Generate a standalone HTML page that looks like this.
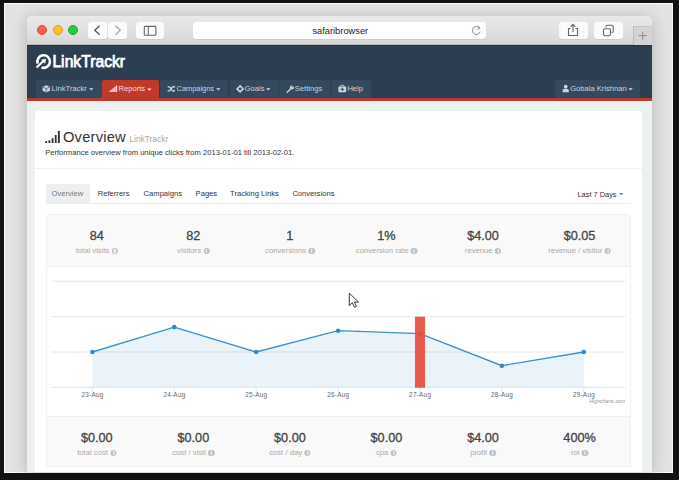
<!DOCTYPE html><html><head><meta charset="utf-8"><style>
html,body{margin:0;padding:0;}
body{width:679px;height:480px;position:relative;overflow:hidden;background:#121212;font-family:"Liberation Sans",sans-serif;}
.t{position:absolute;white-space:nowrap;}
.r{position:absolute;box-sizing:border-box;}
svg{position:absolute;overflow:visible;}
</style></head><body>
<div class="r" style="left:4px;top:3px;width:669.00px;height:470.00px;background:#fafafa;"></div>
<div class="r" style="left:5px;top:4px;width:667.00px;height:468.00px;background:#e3e3e3;"></div>
<div class="r" style="left:27px;top:16px;width:625.00px;height:456.00px;background:#ecf0f1;border-radius:5px 5px 0 0;box-shadow:0 2px 16px rgba(0,0,0,0.22);"></div>
<div class="r" style="left:27px;top:16px;width:625.00px;height:28.50px;background:linear-gradient(#e9e9e9,#e2e2e2 50%,#d6d6d6);border-radius:5px 5px 0 0;border-bottom:1px solid #b8b8b8;"></div>
<div class="r" style="left:36.8px;top:24.6px;width:10.40px;height:10.40px;background:#fd5f57;border-radius:50%;border:0.5px solid #e2463f;"></div>
<div class="r" style="left:52.5px;top:24.6px;width:10.40px;height:10.40px;background:#febb2e;border-radius:50%;border:0.5px solid #e09e1e;"></div>
<div class="r" style="left:68.0px;top:24.6px;width:10.40px;height:10.40px;background:#28c840;border-radius:50%;border:0.5px solid #1aab29;"></div>
<div class="r" style="left:88px;top:22px;width:19.00px;height:16.50px;background:#fbfbfb;border-radius:3px;box-shadow:0 0.5px 0.5px rgba(0,0,0,0.12);"></div>
<div class="r" style="left:108.3px;top:22px;width:18.50px;height:16.50px;background:#fbfbfb;border-radius:3px;box-shadow:0 0.5px 0.5px rgba(0,0,0,0.12);"></div>
<div class="r" style="left:135.7px;top:22px;width:28.80px;height:16.50px;background:#fbfbfb;border-radius:3px;box-shadow:0 0.5px 0.5px rgba(0,0,0,0.12);"></div>
<svg style="left:0;top:0" width="679" height="480"><path d="M99.6,25.8 L94.8,30.3 L99.6,34.8" fill="none" stroke="#555" stroke-width="1.3"/><path d="M115.5,25.8 L120.3,30.3 L115.5,34.8" fill="none" stroke="#aaa" stroke-width="1.3"/><rect x="144.3" y="26.4" width="11.6" height="8.8" fill="none" stroke="#666" stroke-width="1.1" rx="0.8"/><line x1="148.3" y1="26.4" x2="148.3" y2="35.2" stroke="#666" stroke-width="1.1"/></svg><div class="r" style="left:192.5px;top:22.3px;width:293.50px;height:16.50px;background:#fff;border-radius:3.5px;box-shadow:0 0.5px 0.5px rgba(0,0,0,0.1);"></div>
<div class="t" style="left:340.30px;transform:translateX(-50%);top:26.53px;font-size:9.3px;line-height:9.3px;color:#222;font-weight:400;">safaribrowser</div>
<svg style="left:0;top:0" width="679" height="480"><path d="M479.6,28.2 A4,4 0 1 0 480.2,31.5" fill="none" stroke="#888" stroke-width="1"/><path d="M477.6,25.9 L480,28.3 L477.4,29.6" fill="none" stroke="#888" stroke-width="1"/></svg><div class="r" style="left:559px;top:21.8px;width:28.50px;height:17.20px;background:#fbfbfb;border-radius:3px;box-shadow:0 0.5px 0.5px rgba(0,0,0,0.12);"></div>
<div class="r" style="left:594px;top:21.8px;width:28.80px;height:17.20px;background:#fbfbfb;border-radius:3px;box-shadow:0 0.5px 0.5px rgba(0,0,0,0.12);"></div>
<svg style="left:0;top:0" width="679" height="480"><path d="M570.5,28.5 L568.5,28.5 L568.5,35.5 L577.5,35.5 L577.5,28.5 L575.5,28.5" fill="none" stroke="#666" stroke-width="1.1"/><path d="M573,32 L573,24.5 M570.6,26.8 L573,24.4 L575.4,26.8" fill="none" stroke="#666" stroke-width="1.1"/><rect x="603.5" y="28.8" width="7" height="7" rx="1.5" fill="none" stroke="#666" stroke-width="1.1"/><path d="M606,27.2 L606,26.5 Q606,25.3 607.2,25.3 L612,25.3 Q613.2,25.3 613.2,26.5 L613.2,31.3 Q613.2,32.5 612,32.5 L611.5,32.5" fill="none" stroke="#666" stroke-width="1.1"/></svg><div class="r" style="left:633px;top:26px;width:19.00px;height:18.50px;background:#d3d3d3;border-left:1px solid #bdbdbd;border-top:1px solid #c5c5c5;"></div>
<svg style="left:0;top:0" width="679" height="480"><path d="M642.7,31.6 L642.7,39.6 M638.7,35.6 L646.7,35.6" stroke="#8a8a8a" stroke-width="1"/></svg><div class="r" style="left:27px;top:44.5px;width:625.00px;height:53.50px;background:#2c3e50;"></div>
<div class="r" style="left:27px;top:98px;width:625.00px;height:2.50px;background:#b83a2e;"></div>
<div class="r" style="left:27px;top:44.5px;width:625.00px;height:1.80px;background:#25323f;"></div>
<svg style="left:0;top:0" width="679" height="480"><path d="M37.73,63.67 A6.3,6.3 0 1 1 41.53,67.47" fill="none" stroke="#fff" stroke-width="2.5"/><path d="M36.6,67.4 L43.4,61.0" stroke="#fff" stroke-width="2.1"/><path d="M46.1,58.7 L41.0,59.7 L45.1,63.8 Z" fill="#fff"/></svg><div class="t" style="left:52.40px;top:54.39px;font-size:15.6px;line-height:15.6px;color:#fff;font-weight:400;-webkit-text-stroke:0.75px #fff;letter-spacing:0.05px;">LinkTrackr</div>
<div class="r" style="left:35.8px;top:79.5px;width:65.80px;height:18.50px;background:#34495e;border-radius:2px 2px 0 0;"></div>
<div class="r" style="left:160px;top:79.5px;width:67.50px;height:18.50px;background:#34495e;border-radius:2px 2px 0 0;"></div>
<div class="r" style="left:229.5px;top:79.5px;width:48.00px;height:18.50px;background:#34495e;border-radius:2px 2px 0 0;"></div>
<div class="r" style="left:279.3px;top:79.5px;width:50.50px;height:18.50px;background:#34495e;border-radius:2px 2px 0 0;"></div>
<div class="r" style="left:331.3px;top:79.5px;width:39.80px;height:18.50px;background:#34495e;border-radius:2px 2px 0 0;"></div>
<div class="r" style="left:555px;top:79.5px;width:85.20px;height:18.50px;background:#34495e;border-radius:2px 2px 0 0;"></div>
<div class="r" style="left:102.3px;top:79.5px;width:56.50px;height:18.50px;background:#c0392b;border-radius:2px 2px 0 0;"></div>
<div class="t" style="left:51.60px;top:85.07px;font-size:7.6px;line-height:7.6px;color:#cdd4da;font-weight:400;">LinkTrackr</div>
<div class="t" style="left:118.50px;top:85.17px;font-size:7.6px;line-height:7.6px;color:#f7dcd8;font-weight:400;">Reports</div>
<div class="t" style="left:176.60px;top:85.24px;font-size:7.4px;line-height:7.4px;color:#cdd4da;font-weight:400;">Campaigns</div>
<div class="t" style="left:244.60px;top:85.07px;font-size:7.6px;line-height:7.6px;color:#cdd4da;font-weight:400;">Goals</div>
<div class="t" style="left:294.80px;top:85.07px;font-size:7.6px;line-height:7.6px;color:#cdd4da;font-weight:400;">Settings</div>
<div class="t" style="left:347.40px;top:85.07px;font-size:7.6px;line-height:7.6px;color:#cdd4da;font-weight:400;">Help</div>
<div class="t" style="left:570.20px;top:85.07px;font-size:7.6px;line-height:7.6px;color:#cdd4da;font-weight:400;">Gobala Krishnan</div>
<svg style="left:0;top:0" width="679" height="480"><path d="M89,88.2 L93.5,88.2 L91.25,90.5 Z" fill="#cdd4da"/><path d="M147.1,88.4 L151.6,88.4 L149.35,90.7 Z" fill="#f7dcd8"/><path d="M216,88.2 L220.5,88.2 L218.25,90.5 Z" fill="#cdd4da"/><path d="M266,88.2 L270.5,88.2 L268.25,90.5 Z" fill="#cdd4da"/><path d="M628.3,88.2 L632.8,88.2 L630.55,90.5 Z" fill="#cdd4da"/><path d="M46.3,85.2 L50,86.9 L50,90.8 L46.3,92.6 L42.6,90.8 L42.6,86.9 Z" fill="#cdd4da"/><path d="M42.8,87 L46.3,88.7 L49.8,87 M46.3,88.7 L46.3,92.4" fill="none" stroke="#34495e" stroke-width="0.7"/><path d="M109.2,92.1 h1.5 v-1.4 h-1.5 Z M110.9,92.1 h1.4 v-2.6 h-1.4 Z M112.5,92.1 h1.4 v-3.9 h-1.4 Z M114.1,92.1 h1.4 v-5.2 h-1.4 Z M115.7,92.1 h1.5 v-6.5 h-1.5 Z" fill="#f4d3ce"/><path d="M167.6,86.8 L169.5,86.8 L172.5,90.8 L174.2,90.8 M167.6,90.8 L169.5,90.8 L172.5,86.8 L174.2,86.8" fill="none" stroke="#cdd4da" stroke-width="1.3"/><path d="M173.6,85.4 L175.4,86.8 L173.6,88.2 Z M173.6,89.4 L175.4,90.8 L173.6,92.2 Z" fill="#cdd4da"/><path d="M240.1,85.9 L243.1,88.9 L240.1,91.9 L237.1,88.9 Z" fill="none" stroke="#d3d9de" stroke-width="1.5"/><path d="M287.2,92.3 L291.2,88.3" stroke="#cdd4da" stroke-width="1.5" stroke-linecap="round"/><circle cx="292" cy="87.5" r="2.1" fill="#cdd4da"/><path d="M292.4,87.1 L294.6,84.9" stroke="#34495e" stroke-width="1.1"/><rect x="338.4" y="86.4" width="7.8" height="5.8" rx="1" fill="#cdd4da"/><path d="M340.6,86.4 L340.6,85.3 L344,85.3 L344,86.4" fill="none" stroke="#cdd4da" stroke-width="0.8"/><path d="M342.3,87.6 L342.3,91 M340.6,89.3 L344,89.3" stroke="#34495e" stroke-width="1"/><circle cx="565.7" cy="86.6" r="1.9" fill="#cdd4da"/><path d="M562.6,92.3 L562.6,90.6 Q562.6,88.8 564.4,88.8 L567,88.8 Q568.8,88.8 568.8,90.6 L568.8,92.3 Z" fill="#cdd4da"/></svg><div class="r" style="left:35px;top:111px;width:607.00px;height:361.00px;background:#fff;border-radius:2px 2px 0 0;"></div>
<svg style="left:0;top:0" width="679" height="480"><rect x="45.3" y="141" width="1.8" height="2" fill="#333"/><rect x="48.5" y="140.2" width="1.8" height="2.8" fill="#333"/><rect x="51.7" y="138.2" width="1.8" height="4.8" fill="#333"/><rect x="54.8" y="135" width="1.8" height="8" fill="#333"/><rect x="57.9" y="131" width="1.9" height="12" fill="#333"/></svg><div class="t" style="left:63.00px;top:130.16px;font-size:14.7px;line-height:14.7px;color:#333;font-weight:400;letter-spacing:0.2px;">Overview</div>
<div class="t" style="left:129.40px;top:135.39px;font-size:8.4px;line-height:8.4px;color:#a6a6a6;font-weight:400;">LinkTrackr</div>
<div class="t" style="left:45.20px;top:149.07px;font-size:7.6px;line-height:7.6px;color:#333;font-weight:400;">Performance overview from unique clicks from 2013-01-01 till 2013-02-01.</div>
<div class="r" style="left:35px;top:168px;width:607.00px;height:1.00px;background:#f0f0f0;"></div>
<div class="r" style="left:45.6px;top:184.2px;width:44.40px;height:19.30px;background:#ecf0f1;border-radius:2px 2px 0 0;"></div>
<div class="r" style="left:45.6px;top:203.3px;width:585.40px;height:1.00px;background:#eeeeee;"></div>
<div class="t" style="left:51.60px;top:190.37px;font-size:7.6px;line-height:7.6px;color:#777;font-weight:400;">Overview</div>
<div class="t" style="left:97.80px;top:190.37px;font-size:7.6px;line-height:7.6px;color:#333;font-weight:400;">Referrers</div>
<div class="t" style="left:143.60px;top:190.37px;font-size:7.6px;line-height:7.6px;color:#333;font-weight:400;">Campaigns</div>
<div class="t" style="left:195.60px;top:190.37px;font-size:7.6px;line-height:7.6px;color:#333;font-weight:400;">Pages</div>
<div class="t" style="left:230.10px;top:190.37px;font-size:7.6px;line-height:7.6px;color:#333;font-weight:400;">Tracking Links</div>
<div class="t" style="left:292.40px;top:190.37px;font-size:7.6px;line-height:7.6px;color:#333;font-weight:400;">Conversions</div>
<div class="t" style="left:577.50px;top:190.54px;font-size:7.4px;line-height:7.4px;color:#333;font-weight:400;">Last 7 Days</div>
<svg style="left:0;top:0" width="679" height="480"><path d="M619,192.9 L623.5,192.9 L621.25,195.20000000000002 Z" fill="#2f8fd8"/></svg><div class="r" style="left:45.6px;top:214.2px;width:585.40px;height:252.80px;background:#f9f9f9;border:1px solid #f1f1f1;border-radius:3px;"></div>
<div class="r" style="left:46.6px;top:265.6px;width:583.40px;height:151.30px;background:#fff;border-top:1px solid #efefef;border-bottom:1px solid #efefef;"></div>
<div class="t" style="left:96.80px;transform:translateX(-50%);top:229.85px;font-size:12.7px;line-height:12.7px;color:#444;font-weight:400;-webkit-text-stroke:0.3px #444;">84</div>
<div class="t" style="left:96.80px;transform:translateX(-50%);top:247.18px;font-size:7.7px;line-height:7.7px;color:#a9a9a9;font-weight:400;">total visits<span style="display:inline-block;width:6.2px;height:6.2px;border-radius:50%;background:#bac3c9;position:relative;top:0.6px;margin-left:2.4px;"><span style="position:absolute;left:2.55px;top:1.2px;width:1.1px;height:0.9px;background:#f9f9f9"></span><span style="position:absolute;left:2.55px;top:2.6px;width:1.1px;height:2.6px;background:#f9f9f9"></span></span></div>
<div class="t" style="left:96.80px;transform:translateX(-50%);top:431.85px;font-size:12.7px;line-height:12.7px;color:#444;font-weight:400;-webkit-text-stroke:0.3px #444;">$0.00</div>
<div class="t" style="left:96.80px;transform:translateX(-50%);top:449.08px;font-size:7.7px;line-height:7.7px;color:#a9a9a9;font-weight:400;">total cost<span style="display:inline-block;width:6.2px;height:6.2px;border-radius:50%;background:#bac3c9;position:relative;top:0.6px;margin-left:2.4px;"><span style="position:absolute;left:2.55px;top:1.2px;width:1.1px;height:0.9px;background:#f9f9f9"></span><span style="position:absolute;left:2.55px;top:2.6px;width:1.1px;height:2.6px;background:#f9f9f9"></span></span></div>
<div class="t" style="left:193.35px;transform:translateX(-50%);top:229.85px;font-size:12.7px;line-height:12.7px;color:#444;font-weight:400;-webkit-text-stroke:0.3px #444;">82</div>
<div class="t" style="left:193.35px;transform:translateX(-50%);top:247.18px;font-size:7.7px;line-height:7.7px;color:#a9a9a9;font-weight:400;">visitors<span style="display:inline-block;width:6.2px;height:6.2px;border-radius:50%;background:#bac3c9;position:relative;top:0.6px;margin-left:2.4px;"><span style="position:absolute;left:2.55px;top:1.2px;width:1.1px;height:0.9px;background:#f9f9f9"></span><span style="position:absolute;left:2.55px;top:2.6px;width:1.1px;height:2.6px;background:#f9f9f9"></span></span></div>
<div class="t" style="left:193.35px;transform:translateX(-50%);top:431.85px;font-size:12.7px;line-height:12.7px;color:#444;font-weight:400;-webkit-text-stroke:0.3px #444;">$0.00</div>
<div class="t" style="left:193.35px;transform:translateX(-50%);top:449.08px;font-size:7.7px;line-height:7.7px;color:#a9a9a9;font-weight:400;">cost / visit<span style="display:inline-block;width:6.2px;height:6.2px;border-radius:50%;background:#bac3c9;position:relative;top:0.6px;margin-left:2.4px;"><span style="position:absolute;left:2.55px;top:1.2px;width:1.1px;height:0.9px;background:#f9f9f9"></span><span style="position:absolute;left:2.55px;top:2.6px;width:1.1px;height:2.6px;background:#f9f9f9"></span></span></div>
<div class="t" style="left:289.90px;transform:translateX(-50%);top:229.85px;font-size:12.7px;line-height:12.7px;color:#444;font-weight:400;-webkit-text-stroke:0.3px #444;">1</div>
<div class="t" style="left:289.90px;transform:translateX(-50%);top:247.18px;font-size:7.7px;line-height:7.7px;color:#a9a9a9;font-weight:400;">conversions<span style="display:inline-block;width:6.2px;height:6.2px;border-radius:50%;background:#bac3c9;position:relative;top:0.6px;margin-left:2.4px;"><span style="position:absolute;left:2.55px;top:1.2px;width:1.1px;height:0.9px;background:#f9f9f9"></span><span style="position:absolute;left:2.55px;top:2.6px;width:1.1px;height:2.6px;background:#f9f9f9"></span></span></div>
<div class="t" style="left:289.90px;transform:translateX(-50%);top:431.85px;font-size:12.7px;line-height:12.7px;color:#444;font-weight:400;-webkit-text-stroke:0.3px #444;">$0.00</div>
<div class="t" style="left:289.90px;transform:translateX(-50%);top:449.08px;font-size:7.7px;line-height:7.7px;color:#a9a9a9;font-weight:400;">cost / day<span style="display:inline-block;width:6.2px;height:6.2px;border-radius:50%;background:#bac3c9;position:relative;top:0.6px;margin-left:2.4px;"><span style="position:absolute;left:2.55px;top:1.2px;width:1.1px;height:0.9px;background:#f9f9f9"></span><span style="position:absolute;left:2.55px;top:2.6px;width:1.1px;height:2.6px;background:#f9f9f9"></span></span></div>
<div class="t" style="left:386.45px;transform:translateX(-50%);top:229.85px;font-size:12.7px;line-height:12.7px;color:#444;font-weight:400;-webkit-text-stroke:0.3px #444;">1%</div>
<div class="t" style="left:386.45px;transform:translateX(-50%);top:247.18px;font-size:7.7px;line-height:7.7px;color:#a9a9a9;font-weight:400;">conversion rate<span style="display:inline-block;width:6.2px;height:6.2px;border-radius:50%;background:#bac3c9;position:relative;top:0.6px;margin-left:2.4px;"><span style="position:absolute;left:2.55px;top:1.2px;width:1.1px;height:0.9px;background:#f9f9f9"></span><span style="position:absolute;left:2.55px;top:2.6px;width:1.1px;height:2.6px;background:#f9f9f9"></span></span></div>
<div class="t" style="left:386.45px;transform:translateX(-50%);top:431.85px;font-size:12.7px;line-height:12.7px;color:#444;font-weight:400;-webkit-text-stroke:0.3px #444;">$0.00</div>
<div class="t" style="left:386.45px;transform:translateX(-50%);top:449.08px;font-size:7.7px;line-height:7.7px;color:#a9a9a9;font-weight:400;">cpa<span style="display:inline-block;width:6.2px;height:6.2px;border-radius:50%;background:#bac3c9;position:relative;top:0.6px;margin-left:2.4px;"><span style="position:absolute;left:2.55px;top:1.2px;width:1.1px;height:0.9px;background:#f9f9f9"></span><span style="position:absolute;left:2.55px;top:2.6px;width:1.1px;height:2.6px;background:#f9f9f9"></span></span></div>
<div class="t" style="left:483.00px;transform:translateX(-50%);top:229.85px;font-size:12.7px;line-height:12.7px;color:#444;font-weight:400;-webkit-text-stroke:0.3px #444;">$4.00</div>
<div class="t" style="left:483.00px;transform:translateX(-50%);top:247.18px;font-size:7.7px;line-height:7.7px;color:#a9a9a9;font-weight:400;">revenue<span style="display:inline-block;width:6.2px;height:6.2px;border-radius:50%;background:#bac3c9;position:relative;top:0.6px;margin-left:2.4px;"><span style="position:absolute;left:2.55px;top:1.2px;width:1.1px;height:0.9px;background:#f9f9f9"></span><span style="position:absolute;left:2.55px;top:2.6px;width:1.1px;height:2.6px;background:#f9f9f9"></span></span></div>
<div class="t" style="left:483.00px;transform:translateX(-50%);top:431.85px;font-size:12.7px;line-height:12.7px;color:#444;font-weight:400;-webkit-text-stroke:0.3px #444;">$4.00</div>
<div class="t" style="left:483.00px;transform:translateX(-50%);top:449.08px;font-size:7.7px;line-height:7.7px;color:#a9a9a9;font-weight:400;">profit<span style="display:inline-block;width:6.2px;height:6.2px;border-radius:50%;background:#bac3c9;position:relative;top:0.6px;margin-left:2.4px;"><span style="position:absolute;left:2.55px;top:1.2px;width:1.1px;height:0.9px;background:#f9f9f9"></span><span style="position:absolute;left:2.55px;top:2.6px;width:1.1px;height:2.6px;background:#f9f9f9"></span></span></div>
<div class="t" style="left:579.55px;transform:translateX(-50%);top:229.85px;font-size:12.7px;line-height:12.7px;color:#444;font-weight:400;-webkit-text-stroke:0.3px #444;">$0.05</div>
<div class="t" style="left:579.55px;transform:translateX(-50%);top:247.18px;font-size:7.7px;line-height:7.7px;color:#a9a9a9;font-weight:400;">revenue / visitor<span style="display:inline-block;width:6.2px;height:6.2px;border-radius:50%;background:#bac3c9;position:relative;top:0.6px;margin-left:2.4px;"><span style="position:absolute;left:2.55px;top:1.2px;width:1.1px;height:0.9px;background:#f9f9f9"></span><span style="position:absolute;left:2.55px;top:2.6px;width:1.1px;height:2.6px;background:#f9f9f9"></span></span></div>
<div class="t" style="left:579.55px;transform:translateX(-50%);top:431.85px;font-size:12.7px;line-height:12.7px;color:#444;font-weight:400;-webkit-text-stroke:0.3px #444;">400%</div>
<div class="t" style="left:579.55px;transform:translateX(-50%);top:449.08px;font-size:7.7px;line-height:7.7px;color:#a9a9a9;font-weight:400;">roi<span style="display:inline-block;width:6.2px;height:6.2px;border-radius:50%;background:#bac3c9;position:relative;top:0.6px;margin-left:2.4px;"><span style="position:absolute;left:2.55px;top:1.2px;width:1.1px;height:0.9px;background:#f9f9f9"></span><span style="position:absolute;left:2.55px;top:2.6px;width:1.1px;height:2.6px;background:#f9f9f9"></span></span></div>
<svg style="left:0;top:0" width="679" height="480"><line x1="51.5" y1="281.2" x2="625.5" y2="281.2" stroke="#e6e6e6" stroke-width="1"/><line x1="51.5" y1="316.7" x2="625.5" y2="316.7" stroke="#e6e6e6" stroke-width="1"/><line x1="51.5" y1="352.0" x2="625.5" y2="352.0" stroke="#e6e6e6" stroke-width="1"/><polygon points="92.4,387.3 92.4,352.0 174.3,327.1 256.2,352.0 338.1,330.7 420.0,333.7 501.9,365.7 583.8,352.0 583.8,387.3" fill="#2f8bd0" fill-opacity="0.1"/><line x1="51.5" y1="387.3" x2="625.5" y2="387.3" stroke="#d8e4ee" stroke-width="1"/><line x1="92.4" y1="387.3" x2="92.4" y2="391.5" stroke="#d8e4ee" stroke-width="1"/><line x1="174.3" y1="387.3" x2="174.3" y2="391.5" stroke="#d8e4ee" stroke-width="1"/><line x1="256.2" y1="387.3" x2="256.2" y2="391.5" stroke="#d8e4ee" stroke-width="1"/><line x1="338.1" y1="387.3" x2="338.1" y2="391.5" stroke="#d8e4ee" stroke-width="1"/><line x1="420.0" y1="387.3" x2="420.0" y2="391.5" stroke="#d8e4ee" stroke-width="1"/><line x1="501.9" y1="387.3" x2="501.9" y2="391.5" stroke="#d8e4ee" stroke-width="1"/><line x1="583.8" y1="387.3" x2="583.8" y2="391.5" stroke="#d8e4ee" stroke-width="1"/><polyline points="92.4,352.0 174.3,327.1 256.2,352.0 338.1,330.7 420.0,333.7 501.9,365.7 583.8,352.0" fill="none" stroke="#3d91cf" stroke-width="1.35"/><circle cx="92.4" cy="352.0" r="2.3" fill="#2f8bd0"/><circle cx="174.3" cy="327.1" r="2.3" fill="#2f8bd0"/><circle cx="256.2" cy="352.0" r="2.3" fill="#2f8bd0"/><circle cx="338.1" cy="330.7" r="2.3" fill="#2f8bd0"/><circle cx="420.0" cy="333.7" r="2.3" fill="#2f8bd0"/><circle cx="501.9" cy="365.7" r="2.3" fill="#2f8bd0"/><circle cx="583.8" cy="352.0" r="2.3" fill="#2f8bd0"/><rect x="415.2" y="317" width="9.6" height="70.3" fill="#e74c3c" fill-opacity="0.92" stroke="#d9483a" stroke-width="0.5"/></svg><div class="t" style="left:92.55px;transform:translateX(-50%);top:391.68px;font-size:6.4px;line-height:6.4px;color:#666;font-weight:400;letter-spacing:0.25px;">23-Aug</div>
<div class="t" style="left:174.45px;transform:translateX(-50%);top:391.68px;font-size:6.4px;line-height:6.4px;color:#666;font-weight:400;letter-spacing:0.25px;">24-Aug</div>
<div class="t" style="left:256.35px;transform:translateX(-50%);top:391.68px;font-size:6.4px;line-height:6.4px;color:#666;font-weight:400;letter-spacing:0.25px;">25-Aug</div>
<div class="t" style="left:338.25px;transform:translateX(-50%);top:391.68px;font-size:6.4px;line-height:6.4px;color:#666;font-weight:400;letter-spacing:0.25px;">26-Aug</div>
<div class="t" style="left:420.15px;transform:translateX(-50%);top:391.68px;font-size:6.4px;line-height:6.4px;color:#666;font-weight:400;letter-spacing:0.25px;">27-Aug</div>
<div class="t" style="left:502.05px;transform:translateX(-50%);top:391.68px;font-size:6.4px;line-height:6.4px;color:#666;font-weight:400;letter-spacing:0.25px;">28-Aug</div>
<div class="t" style="left:583.95px;transform:translateX(-50%);top:391.68px;font-size:6.4px;line-height:6.4px;color:#666;font-weight:400;letter-spacing:0.25px;">29-Aug</div>
<div class="t" style="right:53.80px;top:398.80px;font-size:5.2px;line-height:5.2px;color:#999;font-weight:400;">Highcharts.com</div>
<svg style="left:0;top:0" width="679" height="480"><path d="M349.3,293.2 L349.3,305.6 L352.3,302.8 L354.5,307.3 L356.5,306.4 L354.4,302.1 L358.6,302.1 Z" fill="#fff" stroke="#222" stroke-width="0.9" stroke-linejoin="round"/></svg></body></html>
